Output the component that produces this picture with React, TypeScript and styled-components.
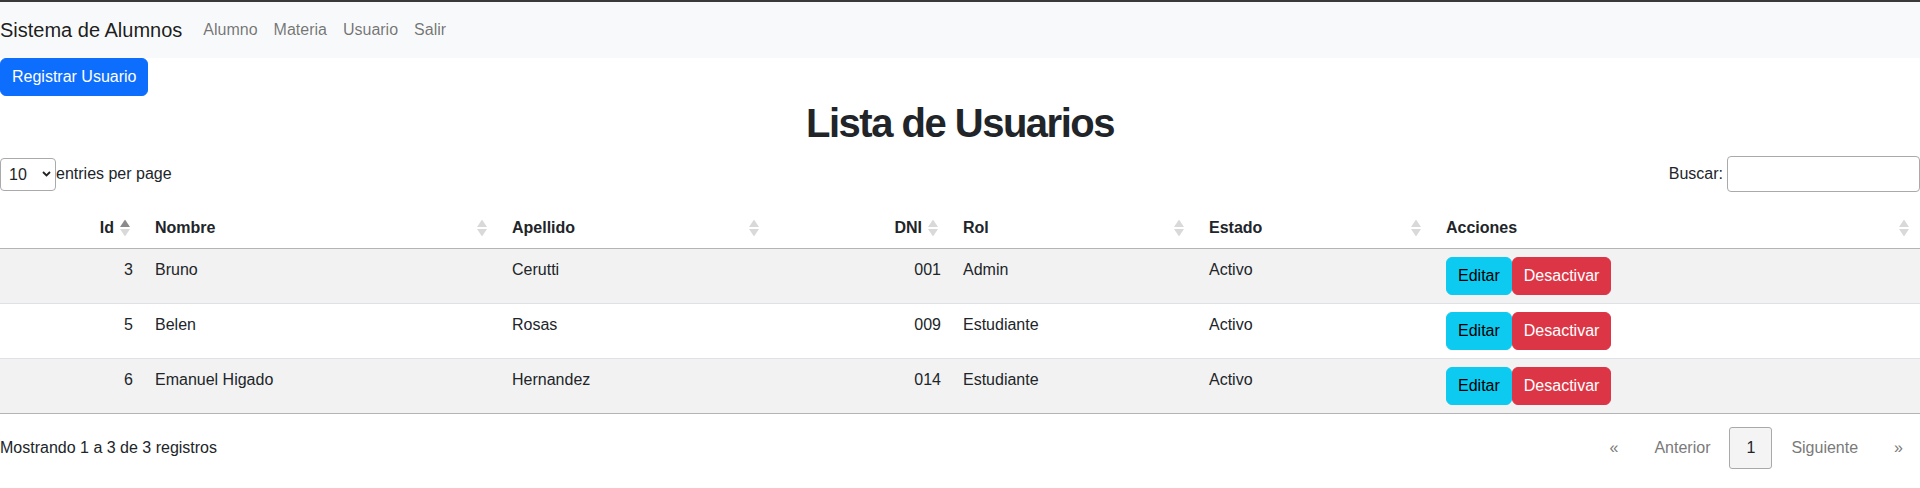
import React from "react";
import styled, { createGlobalStyle } from "styled-components";

const GlobalStyle = createGlobalStyle`
  * { box-sizing: border-box; }
  html, body { margin: 0; padding: 0; }
  body {
    font-family: "Liberation Sans", Arial, sans-serif;
    font-size: 16px;
    line-height: 1.5;
    color: #212529;
    background: #fff;
    border-top: 2px solid #3a3a3a;
  }
`;

const Navbar = styled.nav`
  display: flex;
  align-items: center;
  height: 56px;
  padding: 8px 0;
  background: #f8f9fa;
`;

const Brand = styled.a`
  font-size: 20px;
  line-height: 30px;
  padding: 5px 0;
  margin-right: 13px;
  color: rgba(0, 0, 0, 0.9);
  text-decoration: none;
  white-space: nowrap;
`;

const NavList = styled.ul`
  display: flex;
  list-style: none;
  margin: 0;
  padding: 0;
`;

const NavLink = styled.a`
  display: block;
  padding: 8px;
  line-height: 24px;
  color: rgba(0, 0, 0, 0.55);
  text-decoration: none;
`;

type Variant = "primary" | "info" | "danger";
const palette: Record<Variant, { bg: string; fg: string }> = {
  primary: { bg: "#0d6efd", fg: "#fff" },
  info: { bg: "#0dcaf0", fg: "#000" },
  danger: { bg: "#dc3545", fg: "#fff" },
};

const Button = styled.button<{ $variant: Variant }>`
  display: inline-block;
  font-family: inherit;
  font-size: 16px;
  line-height: 24px;
  padding: 6px 11px;
  border: 1px solid ${(p) => palette[p.$variant].bg};
  border-radius: 6px;
  background: ${(p) => palette[p.$variant].bg};
  color: ${(p) => palette[p.$variant].fg};
  cursor: pointer;
  white-space: nowrap;
`;

const Title = styled.h1`
  margin: 3px 0 5px;
  font-size: 40px;
  line-height: 48px;
  font-weight: 700;
  letter-spacing: -1.5px;
  text-align: center;
  color: #212529;
`;

const DataTop = styled.div`
  display: flex;
  justify-content: space-between;
  align-items: center;
  padding: 4px 0 16px;
`;

const LengthGroup = styled.label`
  display: flex;
  align-items: center;
`;

const SelectWrap = styled.span`
  position: relative;
  display: inline-flex;
`;

const Select = styled.select`
  appearance: none;
  -webkit-appearance: none;
  width: 56px;
  height: 33px;
  padding: 0 0 0 8px;
  font-family: inherit;
  font-size: 16px;
  color: #212529;
  background: #fff;
  border: 1px solid #aaa;
  border-radius: 4px;
`;

const Chevron = styled.svg`
  position: absolute;
  right: 5px;
  top: 50%;
  transform: translateY(-50%);
  pointer-events: none;
`;

const SearchGroup = styled.label`
  display: flex;
  align-items: center;
  gap: 4px;
`;

const SearchInput = styled.input`
  width: 193px;
  height: 36px;
  border: 1px solid #aaa;
  border-radius: 4px;
  font-family: inherit;
  font-size: 16px;
  padding: 0 8px;
`;

const Table = styled.table`
  width: 100%;
  border-collapse: collapse;
  table-layout: fixed;
`;

const Th = styled.th<{ $right?: boolean; $first?: boolean }>`
  padding: 8px 8px 8px ${(p) => (p.$first ? "8px" : "14px")};
  text-align: ${(p) => (p.$right ? "right" : "left")};
  vertical-align: bottom;
  font-weight: 700;
  line-height: 24px;
  border-bottom: 1px solid #b4b4b4;
`;

const Sorter = styled.span`
  position: relative;
  display: block;
  padding-right: 19px;
`;

const SortIcon = styled.svg`
  position: absolute;
  right: 3px;
  top: 50%;
  transform: translateY(-50%);
`;

const Row = styled.tr<{ $striped: boolean }>`
  background: ${(p) => (p.$striped ? "#f2f2f2" : "#fff")};
  & > td { border-bottom: 1px solid #dee2e6; }
  &:last-child > td { border-bottom-color: #b4b4b4; }
`;

const Td = styled.td<{ $right?: boolean; $first?: boolean }>`
  padding: 8px 8px 8px ${(p) => (p.$first ? "8px" : "14px")};
  text-align: ${(p) => (p.$right ? "right" : "left")};
  vertical-align: top;
  line-height: 24px;
`;

const CellText = styled.span`
  display: block;
  padding-top: 1px;
`;

const Actions = styled.div`
  display: flex;
`;

const DataBottom = styled.div`
  display: flex;
  justify-content: space-between;
  align-items: center;
  padding-top: 13px;
`;

const Info = styled.div`
  color: #212529;
`;

const Pager = styled.ul`
  display: flex;
  list-style: none;
  margin: 0;
  padding: 0;
`;

const PageLink = styled.a<{ $active?: boolean }>`
  display: block;
  margin-left: 2px;
  padding: 8px 16px;
  line-height: 24px;
  border: 1px solid ${(p) => (p.$active ? "#a9a9a9" : "transparent")};
  border-radius: 3px;
  background: ${(p) => (p.$active ? "#f4f4f4" : "transparent")};
  color: ${(p) => (p.$active ? "#212529" : "#7a7a7a")};
  text-decoration: none;
`;

const cols = [141, 357, 272, 179, 246, 237];

const headers: { label: string; right?: boolean; active?: boolean }[] = [
  { label: "Id", right: true, active: true },
  { label: "Nombre" },
  { label: "Apellido" },
  { label: "DNI", right: true },
  { label: "Rol" },
  { label: "Estado" },
  { label: "Acciones" },
];

const rows = [
  { id: 3, nombre: "Bruno", apellido: "Cerutti", dni: "001", rol: "Admin", estado: "Activo" },
  { id: 5, nombre: "Belen", apellido: "Rosas", dni: "009", rol: "Estudiante", estado: "Activo" },
  { id: 6, nombre: "Emanuel Higado", apellido: "Hernandez", dni: "014", rol: "Estudiante", estado: "Activo" },
];

function SortGlyph({ active }: { active?: boolean }) {
  return (
    <SortIcon width="10" height="17" viewBox="0 0 10 17">
      <polygon points="0,7.5 5,0 10,7.5" fill={active ? "#8a8a8a" : "#d9d9d9"} />
      <polygon points="0,9.5 5,17 10,9.5" fill="#d9d9d9" />
    </SortIcon>
  );
}

export default function App() {
  return (
    <>
      <GlobalStyle />
      <Navbar>
        <Brand href="#">Sistema de Alumnos</Brand>
        <NavList>
          {["Alumno", "Materia", "Usuario", "Salir"].map((l) => (
            <li key={l}>
              <NavLink href="#">{l}</NavLink>
            </li>
          ))}
        </NavList>
      </Navbar>

      <Button $variant="primary">Registrar Usuario</Button>
      <Title>Lista de Usuarios</Title>

      <DataTop>
        <LengthGroup>
          <SelectWrap>
            <Select defaultValue="10">
              <option value="5">5</option>
              <option value="10">10</option>
              <option value="15">15</option>
              <option value="20">20</option>
              <option value="25">25</option>
            </Select>
            <Chevron width="9" height="6" viewBox="0 0 9 6">
              <path d="M1 1l3.5 3.5L8 1" fill="none" stroke="#222" strokeWidth="1.8" />
            </Chevron>
          </SelectWrap>
          entries per page
        </LengthGroup>
        <SearchGroup>
          Buscar:
          <SearchInput type="search" />
        </SearchGroup>
      </DataTop>

      <Table>
        <colgroup>
          {cols.map((w, i) => (
            <col key={i} style={{ width: w }} />
          ))}
          <col />
        </colgroup>
        <thead>
          <tr>
            {headers.map((h, i) => (
              <Th key={h.label} $right={h.right} $first={i === 0}>
                <Sorter>
                  {h.label}
                  <SortGlyph active={h.active} />
                </Sorter>
              </Th>
            ))}
          </tr>
        </thead>
        <tbody>
          {rows.map((r, i) => (
            <Row key={r.id} $striped={i % 2 === 0}>
              <Td $right $first><CellText>{r.id}</CellText></Td>
              <Td><CellText>{r.nombre}</CellText></Td>
              <Td><CellText>{r.apellido}</CellText></Td>
              <Td $right><CellText>{r.dni}</CellText></Td>
              <Td><CellText>{r.rol}</CellText></Td>
              <Td><CellText>{r.estado}</CellText></Td>
              <Td>
                <Actions>
                  <Button $variant="info">Editar</Button>
                  <Button $variant="danger">Desactivar</Button>
                </Actions>
              </Td>
            </Row>
          ))}
        </tbody>
      </Table>

      <DataBottom>
        <Info>Mostrando 1 a 3 de 3 registros</Info>
        <Pager>
          <li><PageLink href="#">«</PageLink></li>
          <li><PageLink href="#">Anterior</PageLink></li>
          <li><PageLink href="#" $active>1</PageLink></li>
          <li><PageLink href="#">Siguiente</PageLink></li>
          <li><PageLink href="#">»</PageLink></li>
        </Pager>
      </DataBottom>
    </>
  );
}
